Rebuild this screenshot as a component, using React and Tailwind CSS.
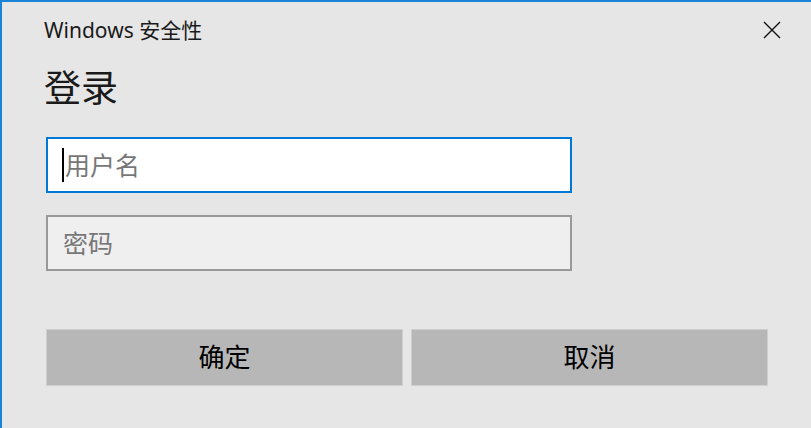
import React from 'react';

const CloseIcon = () => (
  <svg width="18" height="18" viewBox="0 0 18 18" fill="none" stroke="#111" strokeWidth="1.4">
    <path d="M1 1 L17 17 M17 1 L1 17" />
  </svg>
);

export default function App() {
  return (
    <div className="w-[811px] h-[428px] overflow-hidden bg-[#e6e6e6] border-l-2 border-t-2 border-[#1883d7] font-['Noto_Sans','Noto_Sans_CJK_SC',sans-serif]">
      {/* title bar */}
      <div className="flex items-center justify-between pl-[42px] pr-[30px] pt-[14px] h-[42px]">
        <span className="text-[21px] leading-[26px] text-[#1a1a1a]">Windows 安全性</span>
        <CloseIcon />
      </div>

      <div className="pl-[44px] w-[766px]">
        <div className="mt-[22px] text-[37px] leading-[44px] text-[#1a1a1a] -ml-[2px]">登录</div>

        {/* username */}
        <div className="mt-[27px] w-[526px] h-[56px] bg-white border-2 border-[#0078d7] flex items-center pl-[14px]">
          <span className="w-[2px] h-[34px] bg-black mr-px" />
          <span className="text-[25px] leading-none text-[#777]">用户名</span>
        </div>

        {/* password */}
        <div className="mt-[22px] w-[526px] h-[56px] bg-[#efefef] border-2 border-[#999] flex items-center pl-[15px]">
          <span className="text-[25px] leading-none text-[#777]">密码</span>
        </div>

        {/* buttons */}
        <div className="mt-[58px] flex gap-[8px]">
          <button className="w-[357px] h-[57px] bg-[#b7b7b7] border border-[#cfcfcf] text-[26px] text-black">确定</button>
          <button className="w-[357px] h-[57px] bg-[#b7b7b7] border border-[#cfcfcf] text-[26px] text-black">取消</button>
        </div>
      </div>
    </div>
  );
}
